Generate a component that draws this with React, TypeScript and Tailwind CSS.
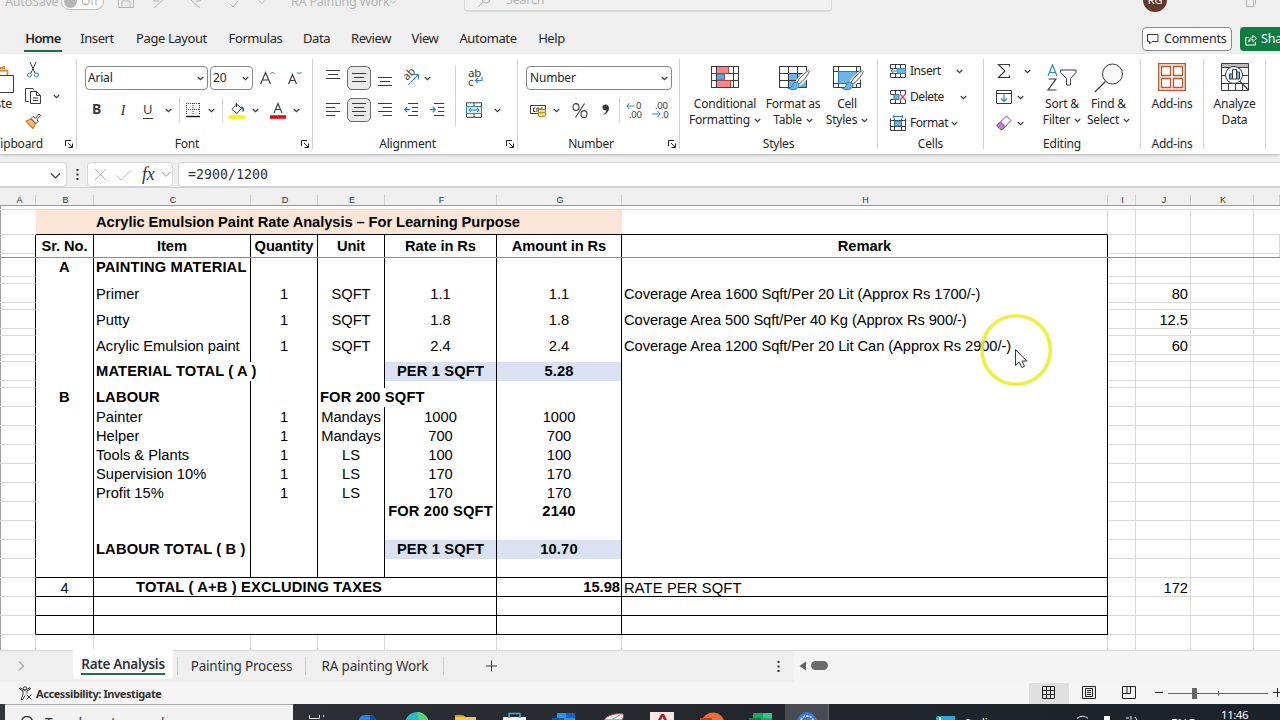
import type { ReactNode } from 'react';

const INK = '#3b3b3b';
const BLUE = '#2b88b8';

interface IconProps {
  w: number;
  h: number;
  className?: string;
  children: ReactNode;
}

function Icon({ w, h, className = '', children }: IconProps) {
  return (
    <svg
      width={w}
      height={h}
      viewBox={`0 0 ${w} ${h}`}
      fill="none"
      stroke={INK}
      className={`shrink-0 ${className}`}
    >
      {children}
    </svg>
  );
}

function Chevron({ className = '' }: { className?: string }) {
  return (
    <Icon w={7} h={7} className={className}>
      <path d="M.8 2l2.7 2.7L6.2 2" strokeWidth="1.2" />
    </Icon>
  );
}

function Lines({ rows, className = '' }: { rows: [number, number, number][]; className?: string }) {
  return (
    <Icon w={14} h={16} className={className}>
      {rows.map(([y, x1, x2]) => (
        <path key={y} d={`M${x1} ${y}.5H${x2}`} />
      ))}
    </Icon>
  );
}

interface GroupProps {
  label: string;
  className: string;
  labelClass?: string;
  launcher?: boolean;
  children: ReactNode;
}

function Group({ label, className, labelClass = '', launcher, children }: GroupProps) {
  return (
    <div className={`flex shrink-0 flex-col border-r border-[#d2d2d2] ${className}`}>
      <div className="flex h-[77px] shrink-0">{children}</div>
      <div className="flex h-[13px] shrink-0 items-center pt-[3px]">
        <span className={`flex-1 text-center leading-[14px] whitespace-nowrap ${labelClass}`}>{label}</span>
        {launcher && (
          <Icon w={8} h={8} className="mr-[3px] -ml-3">
            <path d="M.5 6V.5H6M3 3l4 4M7.5 3.5v4h-4" stroke="#222" />
          </Icon>
        )}
      </div>
    </div>
  );
}

function BigButton({
  icon,
  line1,
  line2,
  arrow,
  className,
}: {
  icon: ReactNode;
  line1: string;
  line2?: string;
  arrow?: boolean;
  className: string;
}) {
  return (
    <div className={`flex shrink-0 flex-col items-center whitespace-nowrap ${className}`}>
      <div className="flex h-[37px] items-center">{icon}</div>
      <span className="h-4 leading-4">{line1}</span>
      {line2 && (
        <span className="flex h-4 items-center leading-4">
          {line2}
          {arrow && <Chevron className="ml-1" />}
        </span>
      )}
    </div>
  );
}

function Brush() {
  return (
    <>
      <path d="M29 8.500c-5 3-10 8-12 12l2 2c4-2.500 9-8 11-12.500z" fill="#fff" stroke="#fff" strokeWidth="3" />
      <path d="M29.300 7.500c-4.500 3-9 8-11 11.500l2 2c4-3 8.500-8.500 10-12.500z" fill="#fff" stroke="#555" />
      <path d="M17.500 19c-3 0-4 2-4.500 4-.5 1.500-2 2-4 2 2 2 8 2.500 10-.5 1-1.500.8-3 .5-3.700z" fill="#6cb4e8" stroke="#2a7ab0" />
    </>
  );
}

function TitleBar() {
  return (
    <div className="-mt-[17px] flex h-[38px] shrink-0 items-center text-[12.5px] tracking-[-0.2px] text-[#b5b5b5]">
      <span className="ml-[5px] w-[54px] whitespace-nowrap">AutoSave</span>
      <div className="mb-0.5 ml-0.5 flex h-[17px] w-[43px] items-center rounded-full border border-[#bbb] bg-white pl-0.5 text-[12px]">
        <div className="size-[13px] rounded-full bg-[#b5b5b5]" />
        <span className="ml-1">Off</span>
      </div>
      <Icon w={16} h={16} className="mb-1 ml-3.5">
        <path d="M.5.5h13l2 2v13H.5zM4 15V9h8v6" stroke="#b5b5b5" />
      </Icon>
      <Icon w={16} h={14} className="ml-[18px]">
        <path d="M2 13l9-8M2 2v4h5" stroke="#b5b5b5" />
      </Icon>
      <Icon w={16} h={14} className="ml-5">
        <path d="M12 13L2 4M12 2v4H8" stroke="#b5b5b5" />
      </Icon>
      <Icon w={12} h={12} className="ml-6">
        <path d="M2 8l3 3 5-6" stroke="#b5b5b5" />
      </Icon>
      <Icon w={8} h={8} className="ml-[18px]">
        <path d="M1 2.500l3 3 3-3" stroke="#b5b5b5" />
      </Icon>
      <span className="ml-[25px] w-[94px] whitespace-nowrap">RA Painting Work</span>
      <Icon w={8} h={8} className="ml-1">
        <path d="M1 2.500l3 3 3-3" stroke="#b5b5b5" />
      </Icon>
      <div className="mb-3 ml-[67px] flex h-8 w-[368px] items-center rounded-[4px] border border-b-2 border-[#dadada] bg-[#f1f1f1] pt-2.5 pl-3">
        <Icon w={14} h={14}>
          <circle cx="9" cy="5" r="4" stroke="#b5b5b5" />
          <path d="M6 8l-5 5" stroke="#b5b5b5" />
        </Icon>
        <span className="ml-[15px]">Search</span>
      </div>
      <div className="mb-1 ml-[311px] flex size-6 items-center justify-center rounded-full bg-[#613a2c] text-[11px] text-white">
        RG
      </div>
      <Icon w={12} h={12} className="ml-[79px]">
        <path d="M.5 2.500h7v8h-7zM3 .5h6.500v8" stroke="#b5b5b5" />
      </Icon>
    </div>
  );
}

const menuTabs = [
  { label: 'Insert', width: 'ml-[19px] w-[32px]' },
  { label: 'Page Layout', width: 'ml-[23px] w-[71px]' },
  { label: 'Formulas', width: 'ml-[22px] w-[53px]' },
  { label: 'Data', width: 'ml-[21px] w-[27px]' },
  { label: 'Review', width: 'ml-[21px] w-[40px]' },
  { label: 'View', width: 'ml-5 w-[28px]' },
  { label: 'Automate', width: 'ml-[21px] w-[56px]' },
  { label: 'Help', width: 'ml-[22px] w-[27px]' },
];

function MenuTabs() {
  return (
    <div className="flex h-[33px] shrink-0 items-center pt-[3px] text-[13px] tracking-[-0.4px] text-[#262626]">
      <div className="ml-6 flex h-[25px] w-[38px] items-center justify-center border-b-2 border-[#1e6b45] pt-0.5 font-semibold tracking-[-0.6px]">
        Home
      </div>
      {menuTabs.map((t) => (
        <span key={t.label} className={`flex shrink-0 justify-center whitespace-nowrap ${t.width}`}>
          {t.label}
        </span>
      ))}
      <div className="ml-auto flex h-6 w-[90px] shrink-0 items-center rounded-[4px] border border-[#8a8a8a] bg-white">
        <Icon w={12} h={12} className="ml-1">
          <path d="M.5 1.500h10.500v7H5L2.500 11V8.500h-2z" />
        </Icon>
        <span className="ml-[5px] text-[12.5px] tracking-[-0.2px] whitespace-nowrap">Comments</span>
      </div>
      <div className="ml-2 flex h-6 w-10 shrink-0 items-center overflow-hidden rounded-l-[4px] bg-[#107c41] text-white">
        <Icon w={12} h={13} className="ml-[5px]">
          <path d="M4 4.500H.8v7.500h9.500V9M3.500 9c.3-3 2-4.500 4.500-4.500V2l3.300 3.500L8 9V6.500c-2 0-3.500.8-4.500 2.500z" stroke="#fff" />
        </Icon>
        <span className="ml-1 text-[12.5px] tracking-[-0.2px]">Share</span>
      </div>
    </div>
  );
}

function FontGroup() {
  return (
    <Group label="Font" className="w-[236px]" labelClass="pr-4" launcher>
      <div className="flex flex-col pt-[7px] pl-2">
        <div className="flex h-6 items-center">
          <div className="flex h-6 w-[123px] items-center justify-between rounded-[4px] border border-[#8a8a8a] pr-[3px] pl-0.5">
            Arial <Chevron />
          </div>
          <div className="ml-0.5 flex h-6 w-[43px] items-center justify-between rounded-[4px] border border-[#8a8a8a] pr-[3px] pl-0.5">
            20 <Chevron />
          </div>
          <Icon w={16} h={16} className="ml-[7px]">
            <path d="M.6 14L5.500 2.500 10.400 14M2.300 10h6.400" strokeWidth="1.200" />
            <path d="M10.500 4l2-2 2 2" stroke={BLUE} />
          </Icon>
          <Icon w={16} h={16} className="ml-3">
            <path d="M.6 14L4.500 4.500 8.500 14M2 10.500h5" strokeWidth="1.200" />
            <path d="M9.500 2l2 2 2-2" stroke={BLUE} />
          </Icon>
        </div>
        <div className="mt-2 flex h-6 items-center text-[#3b3b3b]">
          <span className="mb-[3px] ml-[7px] w-2.5 text-[14px] font-bold">B</span>
          <span className="ml-4 w-2.5 text-center font-['Liberation_Serif',serif] text-[15px] italic">I</span>
          <span className="ml-[15px] h-[17px] w-[10px] border-b border-[#3b3b3b] text-[13px] leading-[15px]">U</span>
          <Chevron className="ml-3" />
          <div className="ml-[7px] h-6 w-px bg-[#d2d2d2]" />
          <Icon w={16} h={16} className="ml-[5px]">
            <path d="M1.500 1v12M8 1v12M14.500 1v12M1 1.500h14M1 7.500h14" strokeDasharray="1 1" />
            <path d="M1 14.500h14" stroke="#111" strokeWidth="1.400" />
          </Icon>
          <Chevron className="ml-[7px]" />
          <div className="ml-[7px] h-6 w-px bg-[#d2d2d2]" />
          <Icon w={18} h={17} className="ml-[5px]">
            <path d="M8.500 2L4 7.500l5 4 4.500-5.500zM8.500 5V1" />
            <path d="M13 5.500c2-.5 2.500 1.500 2.200 4" stroke="#2a66a5" strokeWidth="1.800" />
            <path d="M.5 15h17" stroke="#fdf30a" strokeWidth="3.600" />
          </Icon>
          <Chevron className="ml-1.5" />
          <Icon w={16} h={17} className="ml-[11px]">
            <path d="M4 11L8 1.500 12 11M5.500 7.500h5" strokeWidth="1.100" />
            <path d="M0 15h16" stroke="#e01010" strokeWidth="3.600" />
          </Icon>
          <Chevron className="ml-[7px]" />
        </div>
      </div>
    </Group>
  );
}

function AlignmentGroup() {
  return (
    <Group label="Alignment" className="w-[205px]" labelClass="pr-4" launcher>
      <div className="flex w-[142px] flex-col pt-[7px] pl-[13px]">
        <div className="flex h-6 items-center">
          <Lines rows={[[0, 0, 14], [4, 2, 12], [8, 0, 14]]} />
          <div className="ml-[7px] flex size-6 items-center justify-center rounded-[5px] border border-[#6b6b6b] bg-[#e9e9e9]">
            <Lines rows={[[3, 0, 14], [7, 2, 12], [11, 0, 14]]} />
          </div>
          <Lines className="ml-[7px]" rows={[[7, 0, 14], [11, 2, 12], [15, 0, 14]]} />
          <Icon w={18} h={18} className="ml-2.5">
            <text x="0" y="0" transform="translate(5 12) rotate(-45)" fontSize="11" fill={INK} stroke="none">
              ab
            </text>
            <path d="M6 16L16 6M11.500 5.500H16.500V10.500" stroke={BLUE} />
          </Icon>
          <Chevron className="ml-1" />
        </div>
        <div className="mt-2 flex h-6 items-center">
          <Lines rows={[[1, 0, 14], [5, 0, 9], [9, 0, 14], [13, 0, 9]]} />
          <div className="ml-[7px] flex size-6 items-center justify-center rounded-[5px] border border-[#6b6b6b] bg-[#e9e9e9]">
            <Lines rows={[[1, 0, 14], [5, 2, 12], [9, 0, 14], [13, 2, 12]]} />
          </div>
          <Lines className="ml-[7px]" rows={[[1, 0, 14], [5, 5, 14], [9, 0, 14], [13, 5, 14]]} />
          <Icon w={14} h={16} className="ml-3">
            <path d="M4 1.500h10M8 5.500h6M8 9.500h6M4 13.500h10" />
            <path d="M6 7.500H.8M3 5L.7 7.500 3 10" stroke={BLUE} strokeWidth="1.300" />
          </Icon>
          <Icon w={14} h={16} className="ml-3">
            <path d="M4 1.500h10M8 5.500h6M8 9.500h6M4 13.500h10" />
            <path d="M0 7.500h5.300M3 5l2.300 2.500L3 10" stroke={BLUE} strokeWidth="1.300" />
          </Icon>
        </div>
      </div>
      <div className="mt-1.5 h-[62px] w-px bg-[#d2d2d2]" />
      <div className="flex flex-col pt-[7px] pl-2.5">
        <Icon w={18} h={24} className="ml-0.5">
          <text x="0" y="11" fontSize="11.500" fill={INK} stroke="none">ab</text>
          <text x="0" y="19.500" fontSize="11.500" fill={INK} stroke="none">c</text>
          <path d="M14 11v3.500H7.500M10 12l-2.500 2.500L10 17" stroke={BLUE} strokeWidth="1.200" />
        </Icon>
        <div className="mt-2 flex h-6 items-center">
          <Icon w={16} h={16}>
            <path d="M.5.8h15v14.500H.5zM8 1v3M8 12v3" />
            <path d="M.5 4.500h15v7H.5z" fill="#d8eef8" stroke={BLUE} />
            <path d="M3 8h10M5 6L3 8l2 2M11 6l2 2-2 2" stroke={BLUE} />
          </Icon>
          <Chevron className="ml-3" />
        </div>
      </div>
    </Group>
  );
}

function NumberGroup() {
  return (
    <Group label="Number" className="w-[162px]" labelClass="pr-4" launcher>
      <div className="flex flex-col pt-[7px] pl-2">
        <div className="flex h-6 w-[146px] items-center justify-between rounded-[4px] border border-[#8a8a8a] pr-[3px] pl-[3px]">
          Number <Chevron />
        </div>
        <div className="mt-2 flex h-6 items-center">
          <Icon w={18} h={15} className="ml-1">
            <path d="M.5 2.500h15v8H.5zM5.500 5H3.500v3.500h2M7 9V5h2v4M13 5h-2v3" />
            <path d="M8.500 6.500h7v6.500c-1 1-6 1-7 0z" fill="#fbdc8a" stroke="#b8860b" />
            <path d="M8.500 9c1 1 6 1 7 0" stroke="#b8860b" />
          </Icon>
          <Chevron className="ml-[5px]" />
          <Icon w={16} h={15} className="ml-[12px]">
            <ellipse cx="4" cy="4" rx="3" ry="3.400" strokeWidth="1.100" />
            <ellipse cx="12" cy="11" rx="3" ry="3.400" strokeWidth="1.100" />
            <path d="M12.500.5l-9 14" strokeWidth="1.100" />
          </Icon>
          <Icon w={9} h={14} className="ml-[13px]">
            <path d="M4.500 1.500a3 3 0 1 0 1 5.800C5 9.500 3.500 11 1.500 12c4-.8 6.500-3.500 6.500-7 0-2-1.500-3.500-3.500-3.500z" fill={INK} stroke="none" />
          </Icon>
          <div className="ml-[9px] h-6 w-px bg-[#d2d2d2]" />
          <Icon w={18} h={18} className="ml-1.5">
            <text x="10" y="8" fontSize="9.500" fill={INK} stroke="none">0</text>
            <text x="3" y="16.500" fontSize="9.500" fill={INK} stroke="none">.00</text>
            <path d="M8.500 5H.8M3.500 2l-2.700 3 2.700 3" stroke={BLUE} />
          </Icon>
          <Icon w={18} h={18} className="ml-2">
            <text x="3" y="8" fontSize="9.500" fill={INK} stroke="none">.00</text>
            <text x="9" y="16.500" fontSize="9.500" fill={INK} stroke="none">.0</text>
            <path d="M0 13h8M5.500 10l2.700 3-2.700 3" stroke={BLUE} />
          </Icon>
        </div>
      </div>
    </Group>
  );
}

function StylesGroup() {
  return (
    <Group label="Styles" className="w-[198px]">
      <BigButton
        className="ml-[7px] w-[76px]"
        line1="Conditional"
        line2="Formatting"
        arrow
        icon={
          <Icon w={28} h={24} className="mb-0.5">
            <path d="M.5 1.500h27v21H.5z" fill="#fff" />
            <path d="M.5 8.500h27M.5 15.500h27M22.500 1.500v21" />
            <path d="M5.500 1.500h12v7h-12zM5.500 15.500h14v7h-14z" fill="#ff8585" stroke="#c33" />
            <path d="M5.500 9h8v6h-8z" fill="#5ba5dc" stroke="#3a6ea0" />
            <path d="M5.500 1.500v21M.5 1.500h27v21H.5z" />
          </Icon>
        }
      />
      <BigButton
        className="w-[60px]"
        line1="Format as"
        line2="Table"
        arrow
        icon={
          <Icon w={31} h={28} className="mb-0.5 ml-0.5">
            <path d="M.5 3.500h27v21H.5z" fill="#fff" />
            <path d="M9.500 10.500h18v14h-18z" fill="#6cb4e8" stroke="none" />
            <path d="M.5 3.500h27v21H.5zM.5 10.500h27M.5 17.500h27M9.500 3.500v21M18.500 3.500v21" />
            <Brush />
          </Icon>
        }
      />
      <BigButton
        className="w-12"
        line1="Cell"
        line2="Styles"
        arrow
        icon={
          <Icon w={31} h={28} className="mb-0.5 ml-0.5">
            <path d="M.5 3.500h27v21H.5zM.5 8.500h27M.5 20.500h27M5.500 3.500v21M23.500 3.500v21" />
            <path d="M5.500 8.500h18v12h-18z" fill="#6cb4e8" stroke="#2a7ab0" />
            <Brush />
          </Icon>
        }
      />
    </Group>
  );
}

function CellsGroup() {
  return (
    <Group label="Cells" className="w-[106px]">
      <div className="flex flex-col pl-3">
        <div className="flex h-6 items-center">
          <Icon w={16} h={14}>
            <path d="M.5.500h15v13H.5zM.5 4.500h15M.5 9.500h15M5.500.5v13M10.500.5v13" />
            <path d="M7 4.500h8.500v5H7z" fill="#6cb4e8" stroke={BLUE} />
            <path d="M0 5h7v4H0z" fill="#fff" stroke="none" />
            <path d="M8 7H1M4 4L1 7l3 3" stroke={BLUE} />
          </Icon>
          <span className="ml-1 w-[29px] tracking-[-0.45px]">Insert</span>
          <Chevron className="ml-[17px]" />
        </div>
        <div className="mt-0.5 flex h-6 items-center">
          <Icon w={16} h={14}>
            <path d="M.5 4V.5h15V4M.5 10v3.500h15V10M5.500.5v13M10.500.5v3M10.500 10v3M.5 4.500h5M.5 9.500h5" />
            <path d="M4 4.500h5v5H4z" fill="#6cb4e8" stroke="#2a7ab0" />
            <path d="M10 4l5.500 6M15.500 4L10 10" stroke="#e0454a" strokeWidth="1.300" />
          </Icon>
          <span className="ml-1 w-[33px] tracking-[-0.45px]">Delete</span>
          <Chevron className="ml-[17px]" />
        </div>
        <div className="mt-0.5 flex h-6 items-center">
          <Icon w={16} h={16}>
            <path d="M.5 3.500v12h15v-12M.5 5.500h15M.5 11.500h15M4.500 3.500v12M11.500 3.500v12" />
            <path d="M4.500 6h7v5h-7z" fill="#6cb4e8" stroke="#2a7ab0" />
            <path d="M4 1.500h8M3.500 0v3M12.500 0v3" stroke={BLUE} />
          </Icon>
          <span className="ml-1 w-[38px] tracking-[-0.45px]">Format</span>
          <Chevron className="ml-[3px]" />
        </div>
      </div>
    </Group>
  );
}

function EditingGroup() {
  return (
    <Group label="Editing" className="w-[157px]">
      <div className="flex w-[53px] flex-col pl-3">
        <div className="flex h-6 items-center">
          <Icon w={16} h={16} className="ml-px">
            <path d="M12.500 3.500V1.500H1.500l6.500 6.500-6.500 6.500h11V12.500" strokeWidth="1.200" />
          </Icon>
          <Chevron className="ml-[11px]" />
        </div>
        <div className="mt-0.5 flex h-6 items-center">
          <Icon w={16} h={14}>
            <path d="M.5.500h15v13H.5zM.5 3.500h15" />
            <path d="M8 4.500v7M5 8.500l3 3 3-3" stroke={BLUE} strokeWidth="1.200" />
          </Icon>
          <Chevron className="ml-[5px]" />
        </div>
        <div className="mt-0.5 flex h-6 items-center">
          <Icon w={16} h={16}>
            <path d="M10.500 1l4.500 4.500L6.500 14.500H5L.8 10.500z" fill="#fff" stroke="#8b3fa0" />
            <path d="M4.500 6.800L9 11.500l-3 3H5L.8 10.500z" fill="#c77dd8" stroke="#8b3fa0" />
          </Icon>
          <Chevron className="ml-[5px]" />
        </div>
      </div>
      <BigButton
        className="w-[50px]"
        line1="Sort &"
        line2="Filter"
        arrow
        icon={
          <Icon w={30} h={28}>
            <path d="M1 12L5.500 1 10 12M2.500 8.500h6" stroke={BLUE} strokeWidth="1.200" />
            <path d="M1.500 15H9L1 26h8.500" strokeWidth="1.200" />
            <path d="M13.500 6h15.500v2.500l-5.500 6V21h-4v-6.500l-6-6z" />
          </Icon>
        }
      />
      <BigButton
        className="w-[43px]"
        line1="Find &"
        line2="Select"
        arrow
        icon={
          <Icon w={30} h={30}>
            <circle cx="18.500" cy="11" r="10" fill="#fafafa" />
            <path d="M11.500 18.500L.8 29" strokeWidth="1.200" />
          </Icon>
        }
      />
    </Group>
  );
}

function Ribbon() {
  return (
    <div className="flex h-[101px] shrink-0 overflow-hidden border-b border-[#c6c6c6] bg-white pt-[5px] pb-[5px] text-[12px] tracking-[-0.2px] text-[#262626] shadow-sm">
      <Group label="Clipboard" className="w-[77px]" labelClass="-ml-6 pr-5" launcher>
        <div className="flex w-6 flex-col">
          <Icon w={16} h={30} className="mt-[5px]">
            <path d="M0 4h4V2M0 6.500h7.500V13" stroke="#dc8b2c" strokeWidth="1.800" />
            <path d="M0 11.500h13.500v17H0" fill="#fff" />
          </Icon>
          <span className="-ml-[19px] w-8 pt-px text-[12.5px]">Paste</span>
        </div>
        <div className="flex flex-col">
          <Icon w={12} h={17} className="mt-[3px] ml-[3px]">
            <path d="M3 0l5 11M9 0L4 11" />
            <circle cx="2.500" cy="13" r="2" stroke="#2a7fc0" />
            <circle cx="9.500" cy="13" r="2" stroke="#2a7fc0" />
          </Icon>
          <div className="mt-[9px] flex items-center">
            <Icon w={18} h={17}>
              <path d="M5 13.500H1.500v-13H9L9.500 2" />
              <path d="M6.500 3.500h6l4 4v8h-10zM12.500 3.500v4h4M9 10h5M9 12.500h5" fill="#fff" />
            </Icon>
            <Chevron className="ml-[11px]" />
          </div>
          <Icon w={17} h={16} className="mt-2 ml-px">
            <path d="M1 8l5.500-2 4 4.500L8 15.500z" fill="#f6bd6c" stroke="#d27b1e" strokeWidth="1.200" />
            <path d="M6 5.500L8 3.500l2.500 1.800L14 1l1.500 1.500-3.500 4 1 2-2 2z" fill="#fff" />
          </Icon>
        </div>
      </Group>
      <FontGroup />
      <AlignmentGroup />
      <NumberGroup />
      <StylesGroup />
      <CellsGroup />
      <EditingGroup />
      <Group label="Add-ins" className="w-[63px]">
        <BigButton
          className="w-[62px]"
          line1="Add-ins"
          icon={
            <Icon w={28} h={28} className="mb-0.5">
              <path d="M.7.700h26.600v26.600H.7z" fill="#fdf3ec" stroke="#b8572b" strokeWidth="1.300" />
              <path
                d="M3.500 3.500h9v9h-9zM15.500 3.500h9v9h-9zM3.500 15.500h9v9h-9zM15.500 15.500h9v9h-9z"
                fill="#fff"
                stroke="#b8572b"
                strokeWidth="1.300"
              />
            </Icon>
          }
        />
      </Group>
      <Group label="" className="w-[62px]">
        <BigButton
          className="w-[61px]"
          line1="Analyze"
          line2="Data"
          icon={
            <Icon w={28} h={28} className="mb-0.5">
              <path d="M.5.500h27v27H.5z" fill="#fff" />
              <path d="M1 1h26v3.500H1z" fill="#bbb" stroke="none" />
              <path d="M.5 4.500h27M.5 12.500h27M.5 20.500h27M7.500 20v8M14.500 20v8M21.500 20v8" />
              <circle cx="13" cy="12" r="8.500" fill="#f4fafd" />
              <path d="M19 18.500l8 8" strokeWidth="1.300" />
              <path d="M8.500 11h3v5h-3zM15.500 9h3v7h-3z" fill="#6cb4e8" />
              <path d="M11.500 6.500h4V16h-4z" fill="#fff" />
            </Icon>
          }
        />
      </Group>
    </div>
  );
}

function Dots() {
  return (
    <Icon w={3} h={13}>
      <path d="M1.500 1v2M1.500 5.500v2M1.500 10v2" strokeWidth="2" stroke="#333" />
    </Icon>
  );
}

function FormulaBar() {
  return (
    <div className="flex h-8 shrink-0 items-end pt-[7px]">
      <div className="flex h-[25px] w-[67px] items-center justify-end rounded-r-[4px] border border-l-0 border-[#d6d6d6] bg-white pr-[5px]">
        <Icon w={11} h={8} className="mt-0.5">
          <path d="M1 1.500l4.500 4.500L10 1.500" strokeWidth="1.200" />
        </Icon>
      </div>
      <div className="flex h-[25px] w-5 items-center justify-center">
        <Dots />
      </div>
      <div className="flex h-[25px] w-[86px] items-center rounded-[4px] border border-[#d6d6d6] bg-white">
        <Icon w={13} h={13} className="ml-1.5">
          <path d="M.8.800l11.500 11.500M12.300.8L.8 12.300" stroke="#b8b8b8" />
        </Icon>
        <Icon w={16} h={12} className="ml-[9px]">
          <path d="M.8 6.500l4.500 4.500L15.300 1" stroke="#b8b8b8" />
        </Icon>
        <span className="mb-0.5 ml-2.5 w-4 font-['Liberation_Serif',serif] text-[18px] leading-5 tracking-[-0.2px] text-[#333] italic">
          fx
        </span>
        <Icon w={10} h={7} className="ml-[3px]">
          <path d="M.8 1l4.200 4.500L9.200 1" stroke="#999" />
        </Icon>
      </div>
      <div className="ml-[5px] flex h-[25px] flex-1 items-center rounded-l-[4px] border border-r-0 border-[#d6d6d6] bg-white pt-px pl-[9px] font-['DejaVu_Sans_Mono',monospace] text-[13.3px] text-[#333]">
        =2900/1200
      </div>
    </div>
  );
}

const columns = ['A', 'B', 'C', 'D', 'E', 'F', 'G', 'H', 'I', 'J', 'K', ''];
const gridCols = 'grid grid-cols-[36px_58px_157px_67px_67px_112px_125px_486px_28px_55px_63px_26px]';

interface Row {
  height: string;
  cells?: string[];
  bold?: boolean;
  // index of the column whose right border is covered by overflowing text
  spill?: number;
  fill?: boolean;
  line?: boolean;
}

const gap: Row = { height: 'h-[7px]' };
const empty: Row = { height: 'h-[19px]' };

const bodyRows: Row[] = [
  { height: 'h-[19px]', cells: ['', 'A', 'PAINTING MATERIAL'], bold: true },
  gap,
  {
    height: 'h-[19px]',
    cells: ['', '', 'Primer', '1', 'SQFT', '1.1', '1.1', 'Coverage Area 1600 Sqft/Per 20 Lit (Approx Rs 1700/-)', '', '80'],
  },
  gap,
  {
    height: 'h-[19px]',
    cells: ['', '', 'Putty', '1', 'SQFT', '1.8', '1.8', 'Coverage Area 500 Sqft/Per 40 Kg (Approx Rs 900/-)', '', '12.5'],
  },
  gap,
  {
    height: 'h-[19px]',
    cells: ['', '', 'Acrylic Emulsion paint', '1', 'SQFT', '2.4', '2.4', 'Coverage Area 1200 Sqft/Per 20 Lit Can (Approx Rs 2900/-)', '', '60'],
  },
  gap,
  { height: 'h-[19px]', cells: ['', '', 'MATERIAL TOTAL ( A )', '', '', 'PER 1 SQFT', '5.28'], bold: true, spill: 2, fill: true },
  gap,
  { height: 'h-[19px]', cells: ['', 'B', 'LABOUR', '', 'FOR 200 SQFT'], bold: true, spill: 4 },
  { height: 'h-[19px]', cells: ['', '', 'Painter', '1', 'Mandays', '1000', '1000'] },
  { height: 'h-[19px]', cells: ['', '', 'Helper', '1', 'Mandays', '700', '700'] },
  { height: 'h-[19px]', cells: ['', '', 'Tools & Plants', '1', 'LS', '100', '100'] },
  { height: 'h-[19px]', cells: ['', '', 'Supervision 10%', '1', 'LS', '170', '170'] },
  { height: 'h-[19px]', cells: ['', '', 'Profit 15%', '1', 'LS', '170', '170'] },
  { height: 'h-[19px]', cells: ['', '', '', '', '', 'FOR 200 SQFT', '2140'], bold: true },
  empty,
  { height: 'h-[19px]', cells: ['', '', 'LABOUR TOTAL ( B )', '', '', 'PER 1 SQFT', '10.70'], bold: true, fill: true },
  { height: 'h-[19px]', line: true },
];

function BodyRow({ row }: { row: Row }) {
  return (
    <div className={`${gridCols} ${row.height}`}>
      {columns.map((_, i) => {
        const inTable = i >= 1 && i <= 7;
        const cls = [
          'flex min-w-0 items-center whitespace-nowrap',
          i === 2 || i === 7 || row.spill === i ? 'pl-0.5' : i === 9 ? 'justify-end pr-0.5' : 'justify-center',
          i <= 7 ? 'border-r-black' : 'border-r-[#dadada]',
          row.spill === i || i === 11 ? '' : 'border-r',
          inTable ? (row.line ? 'border-b border-b-black' : '') : 'border-b border-b-[#dadada]',
          row.fill && (i === 5 || i === 6) ? 'bg-[#d9e1f2]' : '',
          row.bold ? 'font-bold tracking-[0.15px]' : row.cells ? 'pt-0.5' : '',
          !row.bold && i === 7 ? 'tracking-[-0.07px]' : '',
        ].join(' ');
        return (
          <div key={i} className={cls}>
            {row.cells?.[i]}
          </div>
        );
      })}
    </div>
  );
}

function SideCells({ value, last }: { value?: string; last?: boolean }) {
  const line = last ? '' : 'border-b border-b-[#dadada]';
  return (
    <>
      <div className={`border-r border-r-[#dadada] ${line}`} />
      <div className={`flex items-center justify-end border-r border-r-[#dadada] pt-0.5 pr-0.5 ${line}`}>{value}</div>
      <div className={`border-r border-r-[#dadada] ${line}`} />
      <div className={line} />
    </>
  );
}

const headers = ['Sr. No.', 'Item', 'Quantity', 'Unit', 'Rate in Rs', 'Amount in Rs', 'Remark'];

function Sheet() {
  return (
    <div className="flex h-[463px] shrink-0 flex-col bg-white font-['Liberation_Sans',Arial,sans-serif] text-[14.7px] leading-none text-black">
      <div className={`${gridCols} h-[19px] shrink-0 items-end border-t border-b border-t-[#d0d0d0] border-b-[#9b9b9b] bg-[#efefef] text-[9px] text-[#333]`}>
        {columns.map((c, i) => (
          <div
            key={i}
            className={`flex h-[10px] items-center justify-center border-r border-[#d0d0d0] ${i === 0 ? 'pl-1' : 'pl-0.5'}`}
          >
            {c}
          </div>
        ))}
      </div>
      <div className="flex h-[444px] flex-col border-l border-[#a0a0a0] [&>div]:-ml-px">
        <div className={`${gridCols} h-1 shrink-0`}>
          {columns.map((_, i) => (
            <div key={i} className="border-b border-[#dadada]" />
          ))}
        </div>
        <div className={`${gridCols} h-[25px] shrink-0`}>
          <div className="border-b border-[#dadada]" />
          <div className="col-span-6 flex items-center border-b border-black bg-[#fbe5d6] pl-[60px] font-bold tracking-[-0.07px]">
            Acrylic Emulsion Paint Rate Analysis – For Learning Purpose
          </div>
          <div className="border-r border-b border-r-[#dadada] border-b-black" />
          <SideCells />
        </div>
        <div className={`${gridCols} h-[23px] shrink-0 border-b border-[#8c8c8c] font-bold tracking-[-0.1px]`}>
          <div className="border-r border-black">
            <div className="h-[19px] border-b border-[#dadada]" />
          </div>
          {headers.map((h) => (
            <div key={h} className="flex items-center justify-center border-r border-black whitespace-nowrap">
              {h}
            </div>
          ))}
          {[0, 1, 2, 3].map((i) => (
            <div key={i} className="border-r border-[#dadada]">
              <div className="h-[19px] border-b border-[#dadada]" />
            </div>
          ))}
        </div>
        {bodyRows.map((row, i) => (
          <BodyRow key={i} row={row} />
        ))}
        <div className={`${gridCols} h-[19px] shrink-0`}>
          <div className="border-r border-b border-r-black border-b-[#dadada]" />
          <div className="flex items-center justify-center border-r border-b border-black pt-0.5">4</div>
          <div className="col-span-4 flex items-center border-r border-b border-black pl-[42px] font-bold tracking-[0.17px]">
            TOTAL ( A+B ) EXCLUDING TAXES
          </div>
          <div className="flex items-center justify-end border-r border-b border-black pr-px font-bold">15.98</div>
          <div className="flex items-center border-r border-b border-black pt-0.5 pl-0.5 tracking-[0.15px]">RATE PER SQFT</div>
          <SideCells value="172" />
        </div>
        {[0, 1].map((i) => (
          <div key={i} className={`${gridCols} h-[19px] shrink-0`}>
            <div className="border-r border-b border-r-black border-b-[#dadada]" />
            <div className="border-r border-b border-black" />
            <div className="col-span-4 border-r border-b border-black" />
            <div className="border-r border-b border-black" />
            <div className="border-r border-b border-black" />
            <SideCells />
          </div>
        ))}
        <div className={`${gridCols} h-[15px] shrink-0`}>
          {columns.slice(0, 8).map((c) => (
            <div key={c} className="border-r border-[#dadada]" />
          ))}
          <SideCells last />
        </div>
      </div>
    </div>
  );
}

function SheetTabs() {
  return (
    <div className="flex h-8 shrink-0 border-t border-[#d6d6d6] bg-[#efefef] text-[13.5px] text-[#333]">
      <Icon w={7} h={12} className="mt-[9px] ml-[18px]">
        <path d="M1 1.500L5.500 6 1 10.500" stroke="#777" />
      </Icon>
      <div className="-mt-px ml-12 flex h-[29px] w-[100px] justify-center rounded-b-[4px] bg-white">
        <span className="mt-1 flex h-[21px] w-[84px] items-center justify-center border-b-2 border-[#1e7145] pt-px font-semibold tracking-[-0.3px] whitespace-nowrap">
          Rate Analysis
        </span>
      </div>
      <div className="mt-1.5 ml-1 h-[18px] w-px bg-[#cfcfcf]" />
      <span className="mt-[5px] ml-[13px] flex w-[101px] justify-center tracking-[-0.2px] whitespace-nowrap">Painting Process</span>
      <div className="mt-1.5 ml-[13px] h-[18px] w-px bg-[#cfcfcf]" />
      <span className="mt-[5px] ml-3.5 flex w-[110px] justify-center tracking-[-0.2px] whitespace-nowrap">RA painting Work</span>
      <div className="mt-1.5 ml-[13px] h-[18px] w-px bg-[#cfcfcf]" />
      <Icon w={12} h={12} className="mt-[9px] ml-[42px]">
        <path d="M5.500 .5v11M0 6h11" />
      </Icon>
      <div className="mt-[9px] ml-[279px]">
        <Dots />
      </div>
      <div className="ml-3.5 flex flex-1 items-center bg-[#f4f4f4] pb-0.5 pl-[5px]">
        <Icon w={8} h={10}>
          <path d="M7 .5v9L.5 5z" fill="#606060" stroke="none" />
        </Icon>
        <div className="ml-1 h-[9px] w-[17px] rounded-full bg-[#6b6b6b]" />
      </div>
    </div>
  );
}

function StatusBar() {
  return (
    <div className="flex h-[22px] shrink-0 items-center bg-[#f5f5f5]">
      <Icon w={15} h={15} className="ml-[18px]">
        <circle cx="7" cy="2.500" r="1.700" />
        <path d="M1.500 3l3.500 2v3.500L3 13.500l1.500.5L7 9.500M12.500 3L9 5v2.500M1.500 3L2 1.800l5 2.500 5-2.500.5 1.200M8.500 8.500l5 5M13.500 8.500l-5 5" />
      </Icon>
      <span className="ml-[3px] pt-0.5 text-[11px] font-bold tracking-[-0.42px] whitespace-nowrap text-[#333]">
        Accessibility: Investigate
      </span>
      <div className="ml-auto flex h-[21px] w-10 items-center justify-center bg-[#e0e0e0]">
        <Icon w={14} h={14}>
          <path d="M.5.500h12v12H.5zM.5 4.500h12M.5 8.500h12M4.500.5v12M8.500.5v12" stroke="#222" />
        </Icon>
      </div>
      <Icon w={14} h={14} className="ml-[13px]">
        <path d="M.5.500h13v12H.5zM3.500 2.500h7v8h-7zM5 4.500h4M5 6.500h4M5 8.500h4" stroke="#222" />
      </Icon>
      <Icon w={14} h={14} className="ml-[26px]">
        <path d="M.5.500h13v12H.5zM.5 7.500h8v-7M5 .5v7" stroke="#222" />
      </Icon>
      <Icon w={125} h={12} className="ml-[19px]">
        <path d="M0 5.500h8" stroke="#222" />
        <path d="M13 6.500h100M63.500 4v5" stroke="#666" />
        <path d="M37 1h5v11h-5z" fill="#666" stroke="none" />
        <path d="M118 5.500h7M122.500 1v9" stroke="#222" />
      </Icon>
    </div>
  );
}

function Taskbar() {
  return (
    <div className="flex h-4 shrink-0 items-start overflow-hidden bg-linear-to-r from-[#33363d] via-[#25282d] to-[#1b2129] text-white">
      <div className="ml-[5px] flex h-10 w-[288px] shrink-0 items-start border-t border-[#aaa] bg-[#f2f2f2] pt-[11px] text-[13.5px] text-[#333]">
        <Icon w={16} h={16} className="ml-3.5">
          <circle cx="8" cy="6" r="5.500" strokeWidth="1.400" />
        </Icon>
        <span className="-mt-[3px] ml-2.5">Type here to search</span>
      </div>
      <Icon w={492} h={16}>
        <path d="M16.500 11v3.500h10V11M30.500 11v2" stroke="#eee" />
        <path d="M66 16c1-4 3-5 7-5h4c3 0 5 2 6 5z" fill="#2f7de0" stroke="none" />
        <path d="M77 11c3 0 5 2 6 5h-6z" fill="#1748a8" stroke="none" />
        <circle cx="124" cy="20" r="12" fill="#2fb5c9" stroke="none" />
        <path d="M124 8a12 12 0 0 1 11 8h-9z" fill="#5fd06f" stroke="none" />
        <path d="M162 11h8l2 2h11v3h-21z" fill="#f4c948" stroke="none" />
        <path d="M162 11h8l1 2h-9z" fill="#d59a1c" stroke="none" />
        <path d="M210 13h23v3h-23z" fill="#f5f8fa" stroke="none" />
        <path d="M216 14v-4.500h11V14" stroke="#3cb1e0" strokeWidth="1.500" />
        <path d="M264 9h18v7h-18z" fill="#2a94dc" stroke="none" />
        <path d="M273 9h9v5h-9z" fill="#1568bd" stroke="none" />
        <path d="M259 14h12v2h-12z" fill="#0f5ba8" stroke="none" />
        <path d="M311 16c3-5 12-7 19-6 1 2 0 4-1 6z" fill="#f3eef0" stroke="#cf4052" />
        <path d="M318 16l9-5" stroke="#999" />
        <path d="M357 8h24v8h-24z" fill="#f7e9e2" stroke="none" />
        <path d="M365 16l3-6h3l3 6h-3l-1.500-3-1.500 3z" fill="#b3202b" stroke="none" />
        <circle cx="420" cy="20" r="11.500" fill="#ec6c42" stroke="none" />
        <path d="M407 14h12v2h-12z" fill="#c43e1c" stroke="none" />
        <path d="M460 9h19v7h-19z" fill="#21a366" stroke="none" />
        <path d="M470 9h9v5h-9z" fill="#33c481" stroke="none" />
        <path d="M456 14h12v2h-12z" fill="#107c41" stroke="none" />
      </Icon>
      <div className="flex h-4 w-[44px] shrink-0 justify-center border-r border-[#62666b] bg-[#484c51]">
        <Icon w={24} h={16}>
          <circle cx="12" cy="18" r="10" fill="#3d74d8" stroke="none" />
          <path d="M6 16c1-3 3-4 6-4s5 1 6 4" stroke="#fff" strokeDasharray="2 1.500" strokeWidth="1.600" />
        </Icon>
      </div>
      <Icon w={20} h={16} className="ml-[107px]">
        <path d="M0 14c0-1.500 1-2 2-2h17v4H0z" fill="#36a3cf" stroke="none" />
        <path d="M3 13h2v3H3z" fill="#fff" stroke="none" />
      </Icon>
      <span className="mt-[11px] ml-2.5 text-[12px] whitespace-nowrap">India</span>
      <Icon w={80} h={16} className="ml-auto">
        <path d="M0 14.500c3-3 8-3 11 0" stroke="#eee" />
        <path d="M27 12h6v4h-6z" fill="#fff" stroke="none" />
        <path d="M49 14h3M54 12v4M58 13l2 3" stroke="#eee" />
      </Icon>
      <span className="mt-[11px] ml-3.5 w-6 text-[12px]">ENG</span>
      <span className="mt-[3px] mr-8 ml-[26px] text-[11.5px] leading-4 tracking-[-0.5px]">11:46</span>
    </div>
  );
}

function Pointer() {
  return (
    <svg width="74" height="74" viewBox="0 0 74 74" fill="none" className="absolute top-[313px] left-[979px]">
      <circle cx="37.200" cy="37" r="34.200" stroke="#ebeb24" strokeWidth="3.600" strokeOpacity="0.850" />
      <path d="M36.500 36.500v16l3.700-3.300 2.600 5.300 2.700-1.200-2.500-5.300h4.700z" fill="#fff" stroke="#333" />
    </svg>
  );
}

export default function App() {
  return (
    <div className="relative flex h-[720px] w-[1280px] flex-col overflow-hidden bg-[#efefef] font-['Noto_Sans','Open_Sans',sans-serif]">
      <TitleBar />
      <MenuTabs />
      <Ribbon />
      <FormulaBar />
      <Sheet />
      <SheetTabs />
      <StatusBar />
      <Taskbar />
      <Pointer />
    </div>
  );
}
